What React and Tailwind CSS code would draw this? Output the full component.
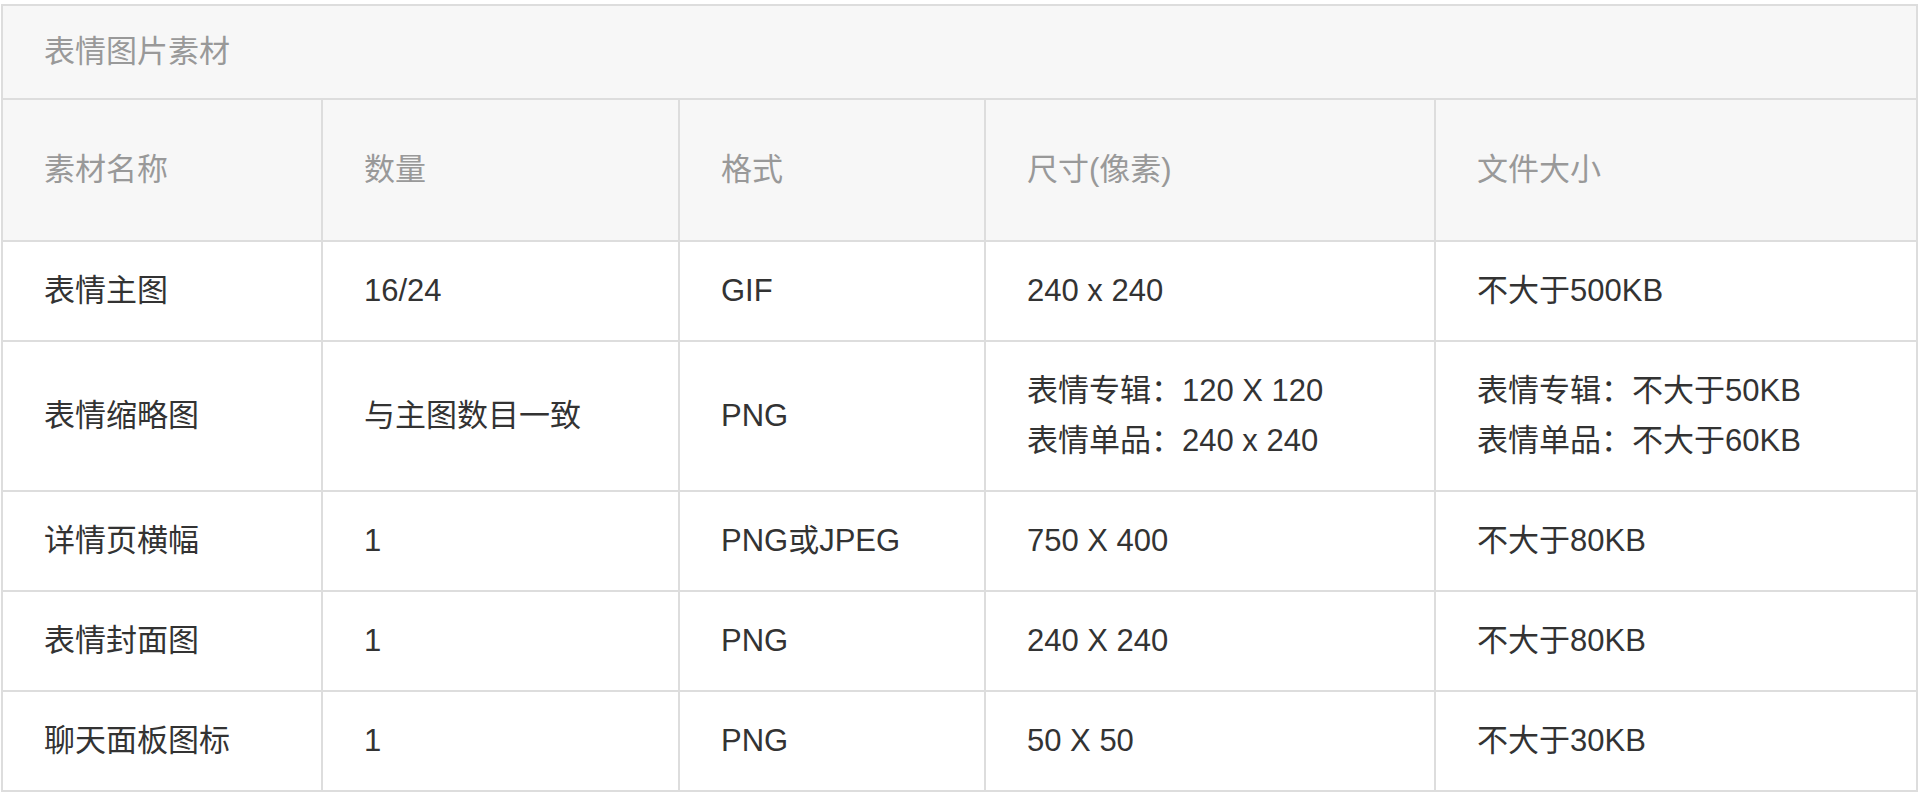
const rows = [
  { name: '表情主图', count: '16/24', format: 'GIF', size: ['240 x 240'], file: ['不大于500KB'] },
  {
    name: '表情缩略图',
    count: '与主图数目一致',
    format: 'PNG',
    size: ['表情专辑：120 X 120', '表情单品：240 x 240'],
    file: ['表情专辑：不大于50KB', '表情单品：不大于60KB'],
  },
  { name: '详情页横幅', count: '1', format: 'PNG或JPEG', size: ['750 X 400'], file: ['不大于80KB'] },
  { name: '表情封面图', count: '1', format: 'PNG', size: ['240 X 240'], file: ['不大于80KB'] },
  { name: '聊天面板图标', count: '1', format: 'PNG', size: ['50 X 50'], file: ['不大于30KB'] },
]

const headers = ['素材名称', '数量', '格式', '尺寸(像素)', '文件大小']

const App = () => {
  return (
    <div className="pt-[4px] pl-px bg-white min-h-screen">
      <table
        className="w-[1917px] table-fixed border-collapse border-2 border-[#dddddd] text-[31px] leading-[50px] text-[#333333]"
        style={{ fontFamily: '"Liberation Sans", "Noto Sans CJK SC", sans-serif' }}
      >
        <colgroup>
          <col className="w-[320px]" />
          <col className="w-[357px]" />
          <col className="w-[306px]" />
          <col className="w-[450px]" />
          <col />
        </colgroup>
        <thead>
          {/* caption row */}
          <tr className="h-[94px] bg-[#f7f7f7]">
            <th colSpan={5} className="border-2 border-[#dddddd] pl-[41px] py-0 text-left font-normal text-[#999999]">
              表情图片素材
            </th>
          </tr>
          <tr className="h-[142px] bg-[#f7f7f7]">
            {headers.map((h) => (
              <th key={h} className="border-2 border-[#dddddd] pl-[41px] py-0 text-left font-normal text-[#999999]">
                {h}
              </th>
            ))}
          </tr>
        </thead>
        <tbody>
          {rows.map((r) => (
            <tr key={r.name} className={r.size.length > 1 ? 'h-[150px]' : 'h-[100px]'}>
              <td className="border-2 border-[#dddddd] pl-[41px] py-0">{r.name}</td>
              <td className="border-2 border-[#dddddd] pl-[41px] py-0">{r.count}</td>
              <td className="border-2 border-[#dddddd] pl-[41px] py-0">{r.format}</td>
              <td className="border-2 border-[#dddddd] pl-[41px] py-0">
                {r.size.map((s) => (
                  <div key={s}>{s}</div>
                ))}
              </td>
              <td className="border-2 border-[#dddddd] pl-[41px] py-0">
                {r.file.map((s) => (
                  <div key={s}>{s}</div>
                ))}
              </td>
            </tr>
          ))}
        </tbody>
      </table>
    </div>
  )
}

export default App
